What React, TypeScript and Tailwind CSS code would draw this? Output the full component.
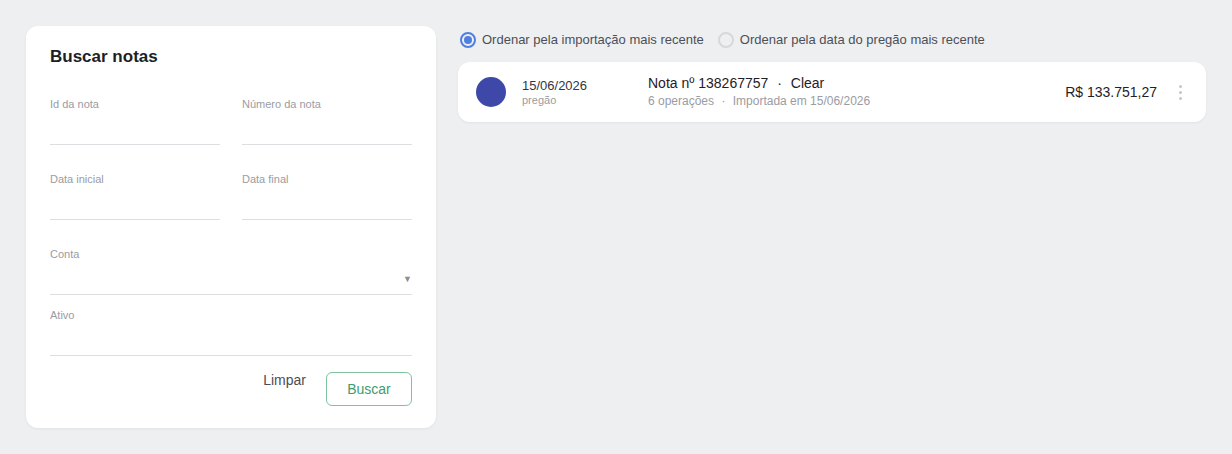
import React from 'react';

const Field = ({ label, select = false }: { label: string; select?: boolean }) => (
  <div>
    <div className="h-[14px] text-[11px] leading-[14px] text-[#9a9ca3]">{label}</div>
    <div className="relative h-[34px] border-b border-[#dcdee2]">
      {select && (
        <span className="absolute right-0 top-[14px] text-[9px] leading-none text-[#8a8d94]">▼</span>
      )}
    </div>
  </div>
);

const App = () => {
  return (
    <div
      className="min-h-[454px] bg-[#eeeff1] flex items-start gap-[22px] pl-[26px] pr-[26px] pt-[26px]"
      style={{ fontFamily: '"Liberation Sans", Arial, sans-serif' }}
    >
      {/* Search card */}
      <div className="w-[410px] shrink-0 bg-white rounded-xl shadow-[0_1px_3px_rgba(0,0,0,0.06)] px-6 pt-5 pb-[22px]">
        <h2 className="text-[17px] leading-[22px] font-bold text-[#1d1f24]">Buscar notas</h2>
        <div className="mt-[29px] grid grid-cols-2 gap-x-[22px] gap-y-[27px]">
          <Field label="Id da nota" />
          <Field label="Número da nota" />
          <Field label="Data inicial" />
          <Field label="Data final" />
        </div>
        <div className="mt-[27px]">
          <Field label="Conta" select />
        </div>
        <div className="mt-[13px]">
          <Field label="Ativo" />
        </div>
        <div className="mt-4 flex justify-end items-start gap-5">
          <button className="text-[14px] leading-[16px] text-[#4a4d55]">Limpar</button>
          <button className="w-[86px] h-[34px] rounded-md border border-[#7cc39e] text-[14px] text-[#3f9c6d]">
            Buscar
          </button>
        </div>
      </div>

      {/* Results */}
      <div className="flex-1">
        <div className="flex items-center h-[28px] text-[13px] text-[#4c4f57]">
          <label className="flex items-center gap-[6px] ml-[2px]">
            <span className="w-4 h-4 rounded-full border-2 border-[#4f7fe0] flex items-center justify-center">
              <span className="w-2 h-2 rounded-full bg-[#4f7fe0]" />
            </span>
            Ordenar pela importação mais recente
          </label>
          <label className="flex items-center gap-[6px] ml-[14px]">
            <span className="w-4 h-4 rounded-full border-2 border-[#d6d8dc]" />
            Ordenar pela data do pregão mais recente
          </label>
        </div>

        <div className="mt-2 h-[60px] bg-white rounded-xl shadow-[0_1px_3px_rgba(0,0,0,0.05)] flex items-center pl-[18px] pr-[24px]">
          <div className="w-[30px] h-[30px] rounded-full bg-[#3d48a8] shrink-0" />
          <div className="ml-4 w-[126px] shrink-0">
            <div className="text-[13px] leading-[16px] text-[#33363d]">15/06/2026</div>
            <div className="text-[11px] leading-[13px] text-[#9a9ca3]">pregão</div>
          </div>
          <div className="flex-1 -mt-[2px]">
            <div className="text-[14px] leading-[18px] text-[#1f2126]">
              Nota nº 138267757 <span className="mx-[5px]">·</span> Clear
            </div>
            <div className="mt-[2px] text-[12px] leading-[15px] text-[#9a9ca3]">
              6 operações <span className="mx-[4px]">·</span> Importada em 15/06/2026
            </div>
          </div>
          <div className="text-[14px] text-[#1f2126]">R$ 133.751,27</div>
          <div className="ml-[22px] flex flex-col gap-[3px] items-center">
            <span className="w-[3px] h-[3px] rounded-full bg-[#c4c6cb]" />
            <span className="w-[3px] h-[3px] rounded-full bg-[#c4c6cb]" />
            <span className="w-[3px] h-[3px] rounded-full bg-[#c4c6cb]" />
          </div>
        </div>
      </div>
    </div>
  );
};

export default App;
